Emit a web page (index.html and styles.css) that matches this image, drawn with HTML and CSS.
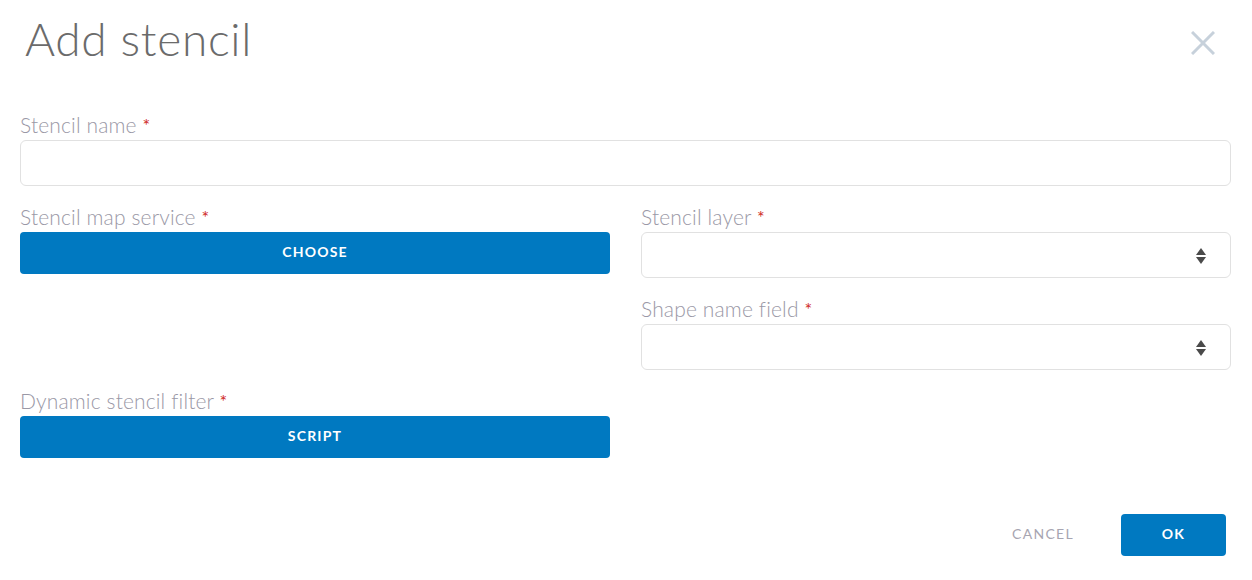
FILE: index.html
```html
<!DOCTYPE html>
<html>
<head>
<meta charset="utf-8">
<link rel="stylesheet" href="styles.css">
</head>
<body>
<div class="dialog">
  <div class="header">
    <h1 class="title">Add stencil</h1>
    <button class="close" aria-label="Close">
      <svg width="24" height="24" viewBox="0 0 24 24"><path d="M1 1 L23 23 M23 1 L1 23" stroke="#c7d1db" stroke-width="3" fill="none"/></svg>
    </button>
  </div>
  <div class="form">
    <div class="field">
      <label class="label">Stencil name <span class="req">*</span></label>
      <div class="input"></div>
    </div>
    <div class="grid">
      <div class="field">
        <label class="label">Stencil map service <span class="req">*</span></label>
        <button class="btn">CHOOSE</button>
      </div>
      <div class="field">
        <label class="label">Stencil layer <span class="req">*</span></label>
        <div class="input select"><span class="arrows"><span class="up"></span><span class="down"></span></span></div>
      </div>
      <div></div>
      <div class="field">
        <label class="label">Shape name field <span class="req">*</span></label>
        <div class="input select"><span class="arrows"><span class="up"></span><span class="down"></span></span></div>
      </div>
      <div class="field">
        <label class="label">Dynamic stencil filter <span class="req">*</span></label>
        <button class="btn">SCRIPT</button>
      </div>
      <div></div>
    </div>
  </div>
  <div class="footer">
    <button class="cancel">CANCEL</button>
    <button class="btn ok">OK</button>
  </div>
</div>
</body>
</html>
```
FILE: styles.css
```css
* { box-sizing: border-box; }
html, body { margin: 0; padding: 0; background: #fff; }
body { font-family: "Lato", "Open Sans", sans-serif; width: 1252px; height: 580px; overflow: hidden; }
.dialog { padding: 0 21px 0 20px; }
.header { display: flex; justify-content: space-between; align-items: flex-start; height: 112px; }
.title { margin: 11px 0 0 5px; font-weight: 300; font-size: 46px; line-height: 56px; color: #6b6b6b; letter-spacing: 0.7px; }
.close { margin: 31px 16px 0 0; padding: 0; border: 0; background: none; width: 24px; height: 24px; display: block; }
.close svg { display: block; }
.field { display: flex; flex-direction: column; }
.label { font-family: "Lato", "Open Sans", sans-serif; font-weight: 300; font-size: 21px; line-height: 26px; color: #9a98a6; letter-spacing: 0.15px; margin-bottom: 2px; }
.req { color: #cf2a1e; font-weight: 400; font-size: 18px; vertical-align: 1px; }
.input { height: 46px; border: 1px solid #e1e1e1; border-radius: 6px; background: #fff; }
.select { position: relative; }
.arrows { position: absolute; right: 24px; top: 15px; display: flex; flex-direction: column; gap: 2px; }
.up { width: 0; height: 0; border-left: 5px solid transparent; border-right: 5px solid transparent; border-bottom: 7px solid #4a4a4a; }
.down { width: 0; height: 0; border-left: 5px solid transparent; border-right: 5px solid transparent; border-top: 7px solid #4a4a4a; }
.grid { display: grid; grid-template-columns: 1fr 1fr; column-gap: 31px; row-gap: 18px; margin-top: 18px; }
.btn { height: 42px; border: 0; border-radius: 4px; background: #0079c1; color: #fff; font-family: "Lato", "Open Sans", sans-serif; font-weight: 700; font-size: 14px; letter-spacing: 1.2px; line-height: 40px; padding: 0 0 2px; cursor: pointer; }
.footer { display: flex; justify-content: flex-end; align-items: center; margin-top: 56px; padding-right: 5px; gap: 27px; }
.cancel { border: 0; background: none; font-family: "Lato", "Open Sans", sans-serif; font-size: 14px; letter-spacing: 1.3px; color: #a7a5b1; padding: 0 20px 4px; height: 42px; }
.ok { width: 105px; }
```
